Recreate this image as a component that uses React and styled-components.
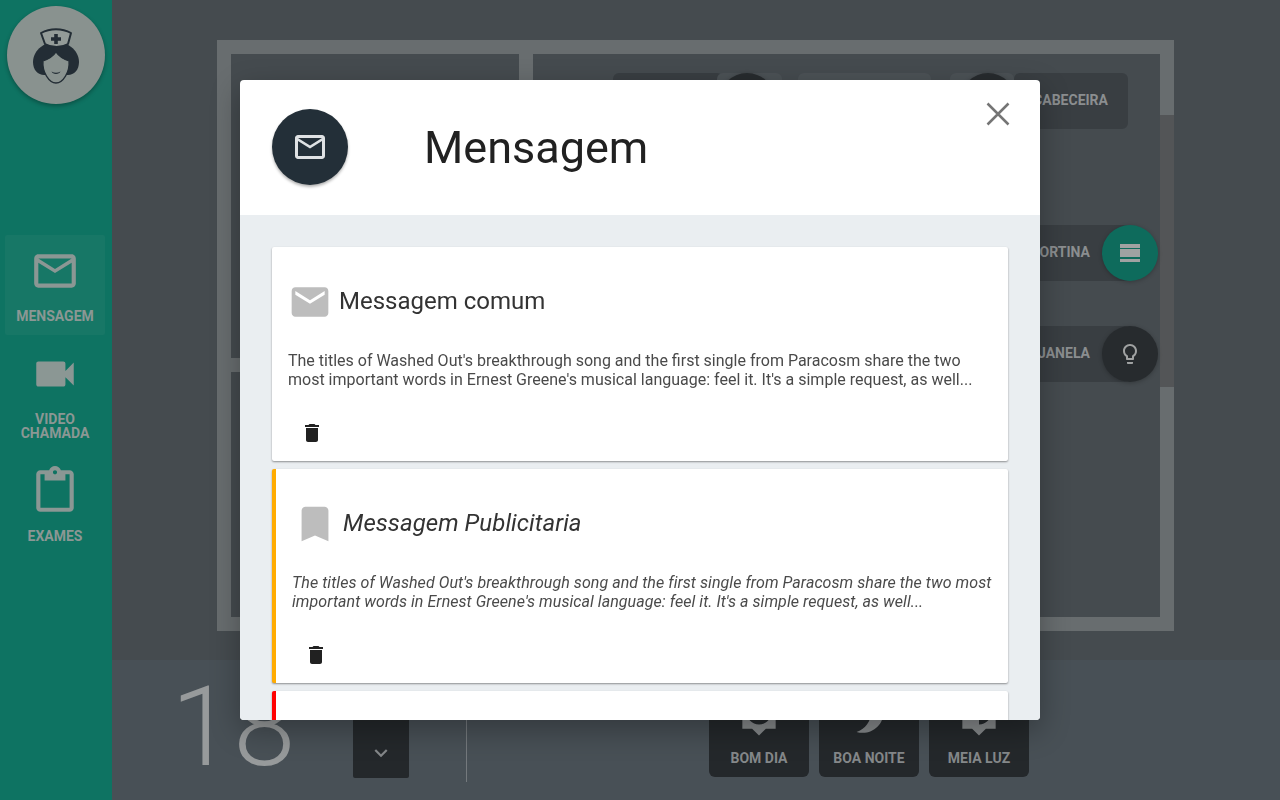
import React from 'react';
import styled, { createGlobalStyle } from 'styled-components';
import {
  MdMailOutline,
  MdVideocam,
  MdContentPaste,
  MdEmail,
  MdBookmark,
  MdDelete,
  MdKeyboardArrowDown,
  MdLightbulbOutline,
  MdBrightness5,
  MdBrightness3,
  MdBrightness6,
} from 'react-icons/md';

const GlobalStyle = createGlobalStyle`
  html, body {
    margin: 0;
    padding: 0;
    height: 100%;
    overflow: hidden;
    font-family: Roboto, "Liberation Sans", sans-serif;
  }
  * {
    box-sizing: border-box;
  }
`;

const Page = styled.div`
  display: flex;
  width: 1280px;
  height: 800px;
  background: #454b4f;
`;

const Sidebar = styled.aside`
  display: flex;
  flex-direction: column;
  width: 112px;
  flex-shrink: 0;
  padding-top: 6px;
  background: #0e7362;
`;

const Avatar = styled.div`
  width: 98px;
  height: 98px;
  margin-left: 7px;
  border-radius: 50%;
  background: #89928f;
  box-shadow: 0 2px 4px rgba(0, 0, 0, 0.3);
`;

const Nav = styled.nav`
  display: flex;
  flex-direction: column;
  gap: 3px;
  width: 100px;
  margin: 131px 0 0 5px;
`;

const NavItem = styled.div`
  display: flex;
  flex-direction: column;
  align-items: center;
  padding: 11px 0 12px;
  border-radius: 2px;
  color: #8b9794;
  background: ${({ $active }) => ($active ? '#177766' : 'transparent')};
`;

const NavLabel = styled.span`
  margin-top: 13px;
  font-size: 14px;
  font-weight: 700;
  line-height: 14px;
  text-align: center;
`;

const Main = styled.main`
  display: flex;
  flex-direction: column;
  flex: 1;
`;

const FloorArea = styled.section`
  height: 660px;
  padding: 40px 0 0 105px;
`;

const Plan = styled.div`
  position: relative;
  width: 957px;
  height: 591px;
  border: 14px solid #686d6f;
`;

const Wall = styled.div`
  position: absolute;
  left: ${({ $left }) => $left}px;
  top: ${({ $top }) => $top}px;
  width: ${({ $width }) => $width}px;
  height: ${({ $height }) => $height}px;
  background: ${({ $color }) => $color || '#686d6f'};
`;

const Pill = styled.div`
  position: absolute;
  left: ${({ $left }) => $left}px;
  top: ${({ $top }) => $top}px;
  display: flex;
  align-items: center;
  justify-content: flex-end;
  width: ${({ $width }) => $width}px;
  height: 56px;
  padding: 0 ${({ $pad }) => $pad || 0}px 2px 0;
  border-radius: 6px;
  font-size: 14px;
  font-weight: 700;
  color: #8b8e90;
  background: ${({ $light }) => ($light ? '#4c5256' : '#393e42')};
`;

const Bulb = styled.div`
  position: absolute;
  left: ${({ $left }) => $left}px;
  top: ${({ $top }) => $top}px;
  display: flex;
  align-items: center;
  justify-content: center;
  width: 56px;
  height: 56px;
  border-radius: 50%;
  color: #a0a2a2;
  background: ${({ $on }) => ($on ? '#0e6b5c' : '#272b2e')};
  box-shadow: 0 1px 4px rgba(0, 0, 0, 0.25);
`;

const BottomBar = styled.section`
  display: flex;
  align-items: flex-end;
  height: 140px;
  padding-left: 59px;
  background: #485056;
`;

const Temperature = styled.div`
  width: 182px;
  height: 139px;
  font-size: 112px;
  font-weight: 300;
  line-height: 132px;
  color: #979a9b;
`;

const DropButton = styled.div`
  display: flex;
  align-items: flex-end;
  justify-content: center;
  width: 56px;
  height: 80px;
  margin-bottom: 22px;
  padding-bottom: 12px;
  border-radius: 2px;
  color: #85888a;
  background: #24282b;
`;

const Divider = styled.div`
  width: 1px;
  height: 100px;
  margin: 0 0 18px 57px;
  background: #74797d;
`;

const Scenes = styled.div`
  display: flex;
  gap: 10px;
  margin: 0 0 23px 242px;
`;

const Scene = styled.div`
  display: flex;
  flex-direction: column;
  align-items: center;
  width: 100px;
  height: 100px;
  padding-top: 10px;
  border-radius: 6px;
  color: #85888a;
  background: #24282b;
`;

const SceneLabel = styled.span`
  margin-top: 14px;
  font-size: 14px;
  font-weight: 700;
  line-height: 14px;
`;

const Scrim = styled.div`
  position: fixed;
  inset: 0;
  display: flex;
  align-items: center;
  justify-content: center;
`;

const Modal = styled.div`
  position: relative;
  display: flex;
  flex-direction: column;
  width: 800px;
  height: 640px;
  overflow: hidden;
  border-radius: 4px;
  background: #fff;
  box-shadow: 0 10px 30px rgba(0, 0, 0, 0.3);
`;

const ModalHeader = styled.header`
  display: flex;
  align-items: center;
  flex-shrink: 0;
  height: 135px;
  padding-left: 32px;
`;

const HeaderIcon = styled.div`
  display: flex;
  align-items: center;
  justify-content: center;
  width: 76px;
  height: 76px;
  margin-bottom: 2px;
  border-radius: 50%;
  color: #dfe2e4;
  background: #232f38;
  box-shadow: 0 2px 3px rgba(0, 0, 0, 0.3);
`;

const ModalTitle = styled.h1`
  margin: 0 0 0 76px;
  font-size: 45px;
  font-weight: 400;
  color: #212121;
`;

const CloseButton = styled.div`
  position: absolute;
  top: 15px;
  right: 23px;
  display: flex;
  color: #757575;
`;

const ModalBody = styled.div`
  display: flex;
  flex-direction: column;
  flex: 1;
  gap: 8px;
  padding: 32px;
  overflow: hidden;
  background: #eaeef1;
`;

const Card = styled.article`
  flex-shrink: 0;
  height: 214px;
  padding: 16px;
  border-left: ${({ $accent }) => ($accent ? `4px solid ${$accent}` : 'none')};
  border-radius: 2px;
  background: #fff;
  box-shadow: 0 1px 2px rgba(0, 0, 0, 0.4);
  font-style: ${({ $italic }) => ($italic ? 'italic' : 'normal')};
  letter-spacing: ${({ $italic }) => ($italic ? '0.06px' : 'normal')};
`;

const CardHead = styled.div`
  display: flex;
  align-items: center;
  gap: ${({ $gap }) => $gap}px;
  height: 44px;
  margin: 17px 0 27px;
  color: #bdbdbd;
`;

const CardTitle = styled.h2`
  margin: 0 0 2px;
  font-size: 24px;
  font-weight: 400;
  color: #333;
`;

const CardText = styled.p`
  margin: 0;
  font-size: 16px;
  line-height: 19px;
  color: #4a4a4a;
`;

const CardActions = styled.div`
  display: flex;
  margin-top: 32px;
  padding-left: 12px;
  color: #212121;
`;

const NurseIcon = () => (
  <svg width="98" height="98" viewBox="7 6 98 98">
    <path
      d="M56 42C42 42 33 52 33 62c0 8 5 13 11 13h24c6 0 11-5 11-13 0-10-9-20-23-20z"
      fill="#232d35"
    />
    <path
      d="M56 52c-4 6-10 8-13 9-1 11 6 22 13 22s14-11 13-22c-3-1-9-3-13-9z"
      fill="#89928f"
      stroke="#232d35"
      strokeWidth="1.3"
    />
    <path
      d="M41 33c9-5 21-5 30 0l-3 11c-7 4-16 4-23 0z"
      fill="#939b98"
      stroke="#232d35"
      strokeWidth="2"
      strokeLinejoin="round"
    />
    <path d="M54.200 34h3.600v3.200H61v3.600h-3.200V44h-3.600v-3.200H51v-3.600h3.200z" fill="#232d35" />
    <path d="M51.500 71.500c3 1.800 6 1.800 9 0-1 3.200-8 3.200-9 0z" fill="#232d35" />
  </svg>
);

const CurtainIcon = () => (
  <svg width="22" height="20" viewBox="0 0 22 20" fill="currentColor">
    <rect x="1" y="1" width="20" height="4" />
    <rect x="1" y="6" width="20" height="8" />
    <rect x="1" y="16" width="20" height="3" />
  </svg>
);

const CloseIcon = () => (
  <svg width="38" height="38" viewBox="0 0 38 38" stroke="currentColor" strokeWidth="2.500">
    <path d="M8.500 8.500l21 21M29.500 8.500l-21 21" />
  </svg>
);

const messages = [
  {
    title: 'Messagem comum',
    icon: <MdEmail size={44} />,
    gap: 7,
  },
  {
    title: 'Messagem Publicitaria',
    icon: <MdBookmark size={46} />,
    gap: 5,
    accent: '#ffab00',
    italic: true,
  },
  {
    title: 'Messagem urgente',
    icon: <MdEmail size={44} />,
    gap: 7,
    accent: '#ff0000',
  },
];

const bodyText =
  "The titles of Washed Out's breakthrough song and the first single from Paracosm share the two most important words in Ernest Greene's musical language: feel it. It's a simple request, as well...";

const App = () => (
  <Page>
    <GlobalStyle />
    <Sidebar>
      <Avatar>
        <NurseIcon />
      </Avatar>
      <Nav>
        <NavItem $active>
          <MdMailOutline size={50} />
          <NavLabel>MENSAGEM</NavLabel>
        </NavItem>
        <NavItem>
          <MdVideocam size={50} />
          <NavLabel>
            VIDEO
            <br />
            CHAMADA
          </NavLabel>
        </NavItem>
        <NavItem>
          <MdContentPaste size={50} />
          <NavLabel>EXAMES</NavLabel>
        </NavItem>
      </Nav>
    </Sidebar>
    <Main>
      <FloorArea>
        <Plan>
          <Wall $left={288} $top={0} $width={14} $height={304} />
          <Wall $left={0} $top={304} $width={300} $height={14} />
          <Wall $left={929} $top={61} $width={14} $height={272} $color="#535557" />
          <Pill $left={382} $top={19} $width={110} />
          <Pill $left={486} $top={19} $width={65} $light />
          <Bulb $left={488} $top={19} />
          <Pill $left={567} $top={19} $width={133} $light />
          <Pill $left={719} $top={19} $width={64} $light />
          <Pill $left={783} $top={19} $width={114} $pad={20}>
            CABECEIRA
          </Pill>
          <Bulb $left={729} $top={19} />
          <Pill $left={700} $top={171} $width={199} $pad={40}>
            CORTINA
          </Pill>
          <Bulb $left={871} $top={171} $on>
            <CurtainIcon />
          </Bulb>
          <Pill $left={700} $top={272} $width={199} $pad={40}>
            JANELA
          </Pill>
          <Bulb $left={871} $top={272}>
            <MdLightbulbOutline size={24} />
          </Bulb>
        </Plan>
      </FloorArea>
      <BottomBar>
        <Temperature>18</Temperature>
        <DropButton>
          <MdKeyboardArrowDown size={26} />
        </DropButton>
        <Divider />
        <Scenes>
          <Scene>
            <MdBrightness5 size={50} />
            <SceneLabel>BOM DIA</SceneLabel>
          </Scene>
          <Scene>
            <MdBrightness3 size={50} />
            <SceneLabel>BOA NOITE</SceneLabel>
          </Scene>
          <Scene>
            <MdBrightness6 size={50} />
            <SceneLabel>MEIA LUZ</SceneLabel>
          </Scene>
        </Scenes>
      </BottomBar>
    </Main>
    <Scrim>
      <Modal>
        <ModalHeader>
          <HeaderIcon>
            <MdMailOutline size={36} />
          </HeaderIcon>
          <ModalTitle>Mensagem</ModalTitle>
        </ModalHeader>
        <CloseButton>
          <CloseIcon />
        </CloseButton>
        <ModalBody>
          {messages.map(({ title, icon, gap, accent, italic }) => (
            <Card key={title} $accent={accent} $italic={italic}>
              <CardHead $gap={gap}>
                {icon}
                <CardTitle>{title}</CardTitle>
              </CardHead>
              <CardText>{bodyText}</CardText>
              <CardActions>
                <MdDelete size={24} />
              </CardActions>
            </Card>
          ))}
        </ModalBody>
      </Modal>
    </Scrim>
  </Page>
);

export default App;
